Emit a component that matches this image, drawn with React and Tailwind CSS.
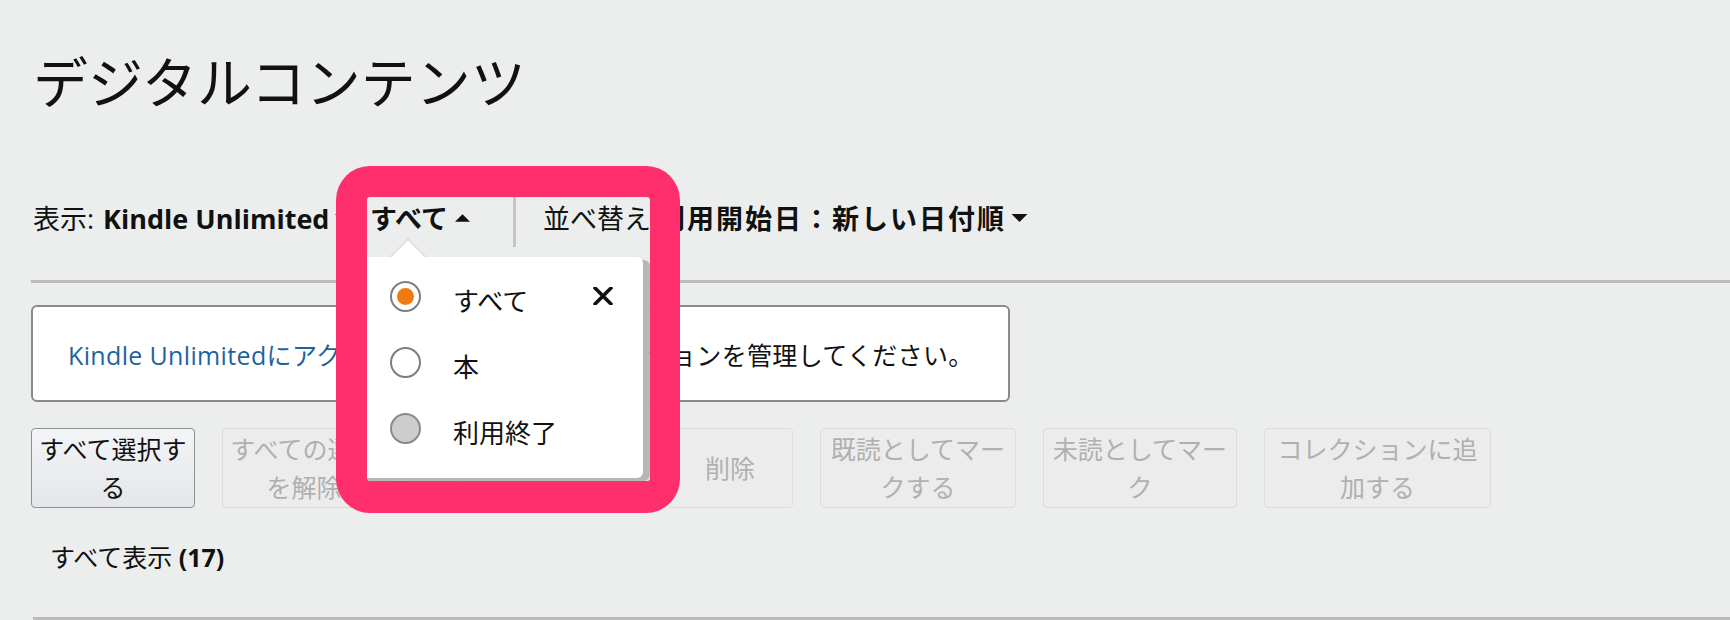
import React from "react";

// small solid caret used by the dropdown labels
const Caret = ({ up = false, className = "" }) => (
  <svg viewBox="0 0 16 8" className={className} fill="currentColor">
    {up ? <path d="M8 0 L16 8 L0 8 Z" /> : <path d="M0 0 L16 0 L8 8 Z" />}
  </svg>
);

const Radio = ({ state }) => {
  if (state === "checked") {
    return (
      <div className="flex h-[31px] w-[31px] shrink-0 items-center justify-center rounded-full border-2 border-[#7d7d7d] bg-white">
        <div className="h-[17px] w-[17px] rounded-full bg-[#f07a10]" />
      </div>
    );
  }
  if (state === "disabled") {
    return <div className="h-[31px] w-[31px] shrink-0 rounded-full border-2 border-[#8a8a8a] bg-[#cdcdcd]" />;
  }
  return <div className="h-[31px] w-[31px] shrink-0 rounded-full border-2 border-[#7d7d7d] bg-white" />;
};

const actions = [
  { label: "すべて選択する", w: "w-[164px]", enabled: true },
  { label: "すべての選択を解除", w: "w-[164px]" },
  { label: "利用を終了する", w: "w-[227px]" },
  { label: "削除", w: "w-[126px]" },
  { label: "既読としてマークする", w: "w-[196px]" },
  { label: "未読としてマーク", w: "w-[194px]" },
  { label: "コレクションに追加する", w: "w-[227px]" },
];

const options = [
  { label: "すべて", state: "checked" },
  { label: "本", state: "empty" },
  { label: "利用終了", state: "disabled" },
];

export default function App() {
  return (
    <div className="relative h-[620px] w-[1730px] overflow-hidden bg-[#eceeed] pl-[31px] font-['Open_Sans','Noto_Sans_CJK_JP',sans-serif] text-[#111]">
      <h1 className="pl-[2px] pt-[54px] text-[55px] font-normal leading-none">デジタルコンテンツ</h1>

      {/* filter / sort bar */}
      <div className="mt-[88px] flex h-[50px] items-center text-[27px] leading-none">
        <div className="flex w-[339px] items-center pb-[8px] pl-[2px]">
          <span>表示:</span>
          <span className="ml-[9px] font-bold">Kindle Unlimited</span>
          <Caret className="ml-[6px] h-[8px] w-[16px]" />
        </div>
        <div className="flex w-[143px] items-center pb-[8px]">
          <span className="font-bold">すべて</span>
          <Caret up className="ml-[7px] h-[8px] w-[15px]" />
        </div>
        <div className="h-full w-[3px] bg-[#c6c6c6]" />
        <div className="ml-[27px] flex items-center pb-[8px]">
          <span>並べ替え:</span>
          <span className="font-bold tracking-[2px]">利用開始日：新しい日付順</span>
          <Caret className="ml-[5px] h-[8px] w-[17px]" />
        </div>
      </div>

      <div className="mt-[33px] h-[3px] bg-[#bbbbbb]" />

      <div className="mt-[22px] flex h-[97px] w-[979px] items-center rounded-[6px] border-2 border-[#8a8a8a] bg-white pl-[35px] pt-[3px] text-[25px] leading-none tracking-[0.35px]">
        <span className="text-[#1f639e]">Kindle Unlimitedにアクセス</span>
        <span>するにはサブスクリプションを管理してください。</span>
      </div>

      <div className="mt-[26px] flex gap-[27px]">
        {actions.map((a) => (
          <div
            key={a.label}
            className={`flex h-[80px] items-center justify-center rounded-[4px] border px-[3px] text-center text-[25px] leading-[38px] ${a.w} ${
              a.enabled
                ? "border-[#8d9096] bg-linear-to-b from-[#f3f4f6] to-[#e4e6e9] text-[#111]"
                : "border-[#dcdcdc] bg-[#ececec] text-[#b0b0b0]"
            }`}
          >
            {a.label}
          </div>
        ))}
      </div>

      <div className="mt-[37px] pl-[19px] text-[25px] leading-none">
        すべて表示 <span className="font-bold">(17)</span>
      </div>

      <div className="ml-[2px] mt-[47px] h-[3px] bg-[#bbbbbb]" />

      {/* open dropdown */}
      <div className="absolute left-[395px] top-[244px] h-[26px] w-[26px] rotate-45 border-l border-t border-[#cfcfcf] bg-white" />
      <div className="absolute left-[350px] top-[257px] h-[221px] w-[293px] rounded-[6px] bg-white pl-[40px] pt-[6px] shadow-[7px_3px_1px_#b6b6b6]">
        {options.map((o) => (
          <div key={o.label} className="flex h-[66px] items-center">
            <Radio state={o.state} />
            <span className="ml-[32px] pt-[9px] text-[26px] leading-none">{o.label}</span>
          </div>
        ))}
        <svg viewBox="0 0 20 18" className="absolute left-[243px] top-[30px] h-[18px] w-[20px]">
          <path d="M2 1 L18 17 M18 1 L2 17" stroke="#111" strokeWidth="3.6" strokeLinecap="round" />
        </svg>
      </div>

      {/* highlight frame */}
      <div className="absolute left-[336px] top-[166px] h-[347px] w-[344px] rounded-[34px] border-b-[32px] border-l-[31px] border-r-[30px] border-t-[31px] border-[#ff2e6c]" />
    </div>
  );
}
